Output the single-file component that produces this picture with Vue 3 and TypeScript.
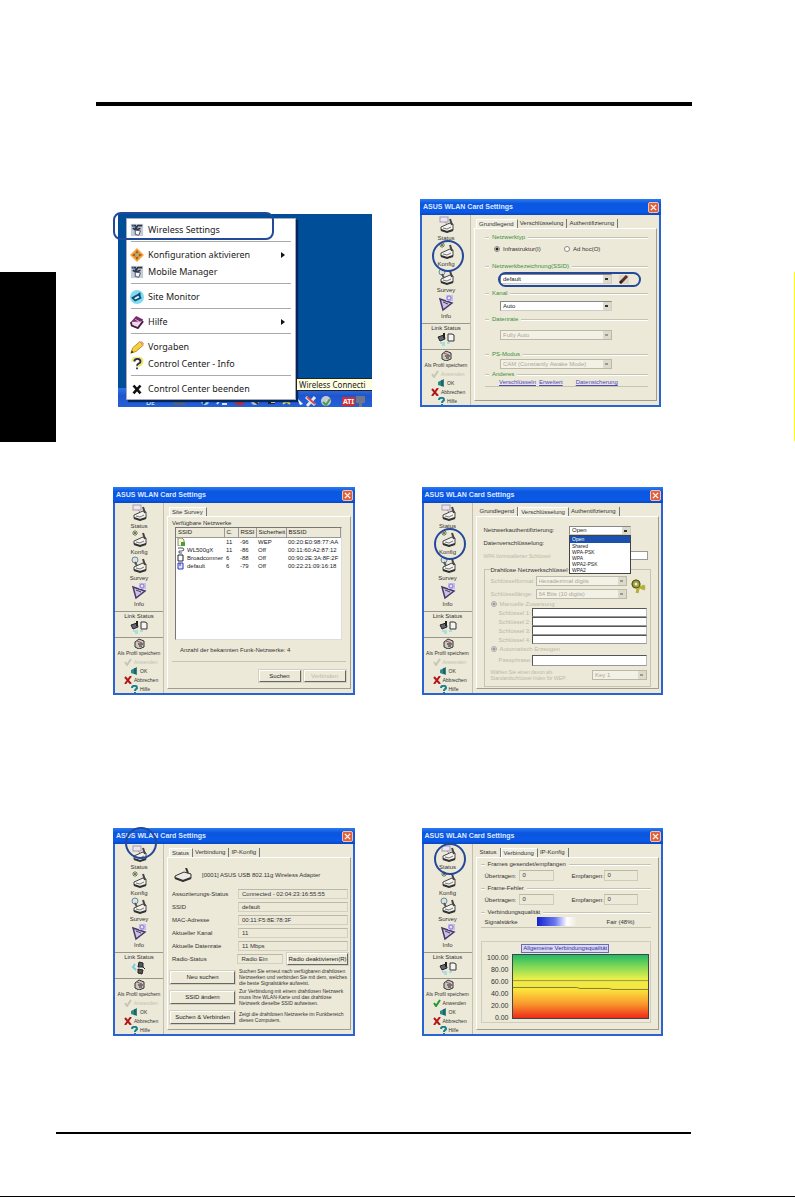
<script setup lang="ts">
type Kind = 'config' | 'survey' | 'crypt' | 'status' | 'link'

interface Dialog {
  kind: Kind
  tabs: string[]
  active: number
  ring: string
  canApply: boolean
}

const rows: Dialog[][] = [
  [{ kind: 'config', tabs: ['Grundlegend', 'Verschlüsselung', 'Authentifizierung'], active: 0, ring: 'ring-config', canApply: false }],
  [
    { kind: 'survey', tabs: ['Site Survey'], active: 0, ring: '', canApply: false },
    { kind: 'crypt', tabs: ['Grundlegend', 'Verschlüsselung', 'Authentifizierung'], active: 1, ring: 'ring-config', canApply: false },
  ],
  [
    { kind: 'status', tabs: ['Status', 'Verbindung', 'IP-Konfig'], active: 0, ring: 'ring-title', canApply: false },
    { kind: 'link', tabs: ['Status', 'Verbindung', 'IP-Konfig'], active: 1, ring: 'ring-status', canApply: true },
  ],
]

const menuGroups = [
  [{ icon: 'card', text: 'Wireless Settings', sub: false }],
  [
    { icon: 'config', text: 'Konfiguration aktivieren', sub: true },
    { icon: 'card', text: 'Mobile Manager', sub: false },
  ],
  [{ icon: 'monitor', text: 'Site Monitor', sub: false }],
  [{ icon: 'book', text: 'Hilfe', sub: true }],
  [
    { icon: 'pencil', text: 'Vorgaben', sub: false },
    { icon: 'info', text: 'Control Center - Info', sub: false },
  ],
  [{ icon: 'close', text: 'Control Center beenden', sub: false }],
]

const sideItems = ['Status', 'Konfig', 'Survey', 'Info']

const networks = [
  { icon: 'lock', ssid: '', ch: '11', rssi: '-96', sec: 'WEP', bssid: '00:20:E0:98:77:AA' },
  { icon: 'on', ssid: 'WL500gX', ch: '11', rssi: '-86', sec: 'Off', bssid: '00:11:60:A2:87:12' },
  { icon: 'page', ssid: 'Broadcomner', ch: '6', rssi: '-88', sec: 'Off', bssid: '00:90:2E:3A:8F:2F' },
  { icon: 'ap', ssid: 'default', ch: '6', rssi: '-79', sec: 'Off', bssid: '00:22:21:09:16:18' },
]

const authModes = ['Open', 'Shared', 'WPA-PSK', 'WPA', 'WPA2-PSK', 'WPA2']

const statusRows = [
  ['Assoziierungs-Status', 'Connected - 02:04:23:16:55:55'],
  ['SSID', 'default'],
  ['MAC-Adresse', '00:11:F5:8E:78:3F'],
  ['Aktueller Kanal', '11'],
  ['Aktuelle Datenrate', '11 Mbps'],
]

const actions = [
  { label: 'Neu suchen', text: 'Suchen Sie erneut nach verfügbaren drahtlosen Netzwerken und verbinden Sie mit dem, welches die beste Signalstärke aufweist.' },
  { label: 'SSID ändern', text: 'Zur Verbindung mit einem drahtlosen Netzwerk muss Ihre WLAN-Karte und das drahtlose Netzwerk dieselbe SSID aufweisen.' },
  { label: 'Suchen & Verbinden', text: 'Zeigt die drahtlosen Netzwerke im Funkbereich dieses Computers.' },
]

const frames = ['Frames gesendet/empfangen', 'Frame-Fehler']
const ticks = ['100.00', '80.00', '60.00', '40.00', '20.00', '0.00']
</script>

<template>
  <div class="page">
    <div class="thumb"></div>
    <main class="content">
      <hr class="rule-top" />
      <section v-for="(row, r) in rows" :key="r" class="row" :class="'row-' + r">
        <div v-if="r === 0" class="desktop">
          <div class="taskbar">
            <span class="lang">DE</span>
            <svg class="tray" viewBox="0 0 210 12">
              <rect x="12" y="2" width="12" height="8" fill="#50617e" />
              <circle cx="44" cy="6" r="4" fill="#9fd0ff" /><path d="M42 9l5-6" stroke="#235" stroke-width="2" />
              <path d="M56 9l5-7M61 9h5" stroke="#d6e7ff" stroke-width="2" />
              <rect x="74" y="3" width="9" height="7" fill="#b72a3b" /><rect x="77" y="2" width="5" height="4" fill="#333" />
              <circle cx="94" cy="6" r="4" fill="#b5bfd0" /><path d="M91 4l6 5" stroke="#333" stroke-width="2" />
              <path d="M107 3h7v6h-7z" fill="#222" /><path d="M110 5h4v3h-4z" fill="#ddd" />
              <path d="M121 3l8 6M122 9l6-5" stroke="#e8cb3b" stroke-width="2" />
              <path d="M136 3l3 7 3-1z" fill="#fff" />
              <path d="M145 2l9 8M154 2l-8 9" stroke="#e3e8ef" stroke-width="3" /><path d="M146 2l8 7" stroke="#d84848" stroke-width="2" />
              <circle cx="165" cy="6" r="5" fill="#c4ccd0" /><path d="M162 7l3 3 4-6" stroke="#4c9a50" stroke-width="2" fill="none" />
              <path d="M195 1h9v7h-3v4h-3v-4h-3z" fill="#6d7789" />
            </svg>
            <b class="ati">ATI</b>
          </div>
          <nav class="menu">
            <template v-for="(group, g) in menuGroups" :key="g">
              <hr v-if="g > 0" />
              <button v-for="item in group" :key="item.text" class="menu-item" type="button">
                <svg viewBox="0 0 16 16">
                  <g v-if="item.icon === 'card'">
                    <rect x="1" y="1" width="14" height="14" fill="#c3cdd8" />
                    <path d="M2 3h4l1 3 2-3h5M3 6l4 2 5-2" stroke="#334" stroke-width="2" fill="none" />
                    <path d="M6 8l6 1-2 5-4-1z" fill="#f6f8fa" stroke="#445" />
                    <path d="M3 3l3 2" stroke="#4e86c8" stroke-width="2" />
                  </g>
                  <g v-else-if="item.icon === 'config'">
                    <path d="M8 0l8 8-8 8-8-8z" fill="#f2a93f" /><path d="M8 2l2 4H6zM8 14l-2-4h4zM2 8l4-2v4zM14 8l-4 2V6z" fill="#b5541c" />
                    <circle cx="8" cy="8" r="2" fill="#8bb98a" />
                  </g>
                  <g v-else-if="item.icon === 'monitor'">
                    <circle cx="8" cy="8" r="8" fill="#7fdcf0" /><path d="M3 9l7-4 2 4-6 3z" fill="#d8f5fa" stroke="#134a78" stroke-width="2" /><path d="M11 3v4" stroke="#134a78" stroke-width="2" />
                  </g>
                  <g v-else-if="item.icon === 'book'">
                    <path d="M1 8l6-7 8 4-5 8z" fill="#7b2a6c" /><path d="M1 8l1 4 7 3 6-8" fill="#eadbe8" stroke="#4d164a" stroke-width="2" /><path d="M6 5l4 2-2 2" stroke="#e7b4dd" stroke-width="1" fill="none" />
                  </g>
                  <g v-else-if="item.icon === 'pencil'">
                    <path d="M1 15l2-6 8-7 4 4-8 7z" fill="#f5cf3d" stroke="#b98418" /><path d="M11 2l2-1 3 3-1 2z" fill="#e59a90" /><path d="M1 15l1-3 2 2z" fill="#222" />
                  </g>
                  <g v-else-if="item.icon === 'info'">
                    <path d="M4 5c0-5 9-5 9 0 0 3-4 3-4 6" stroke="#f0e95c" stroke-width="5" fill="none" />
                    <path d="M5 5c0-4 7-4 7 0 0 3-4 2-4 5M8 12v2" stroke="#22246e" stroke-width="2" fill="none" />
                  </g>
                  <path v-else d="M4 4l8 9M12 4l-8 9" stroke="#111" stroke-width="3" />
                </svg>
                <span>{{ item.text }}</span>
                <i v-if="item.sub" class="sub"></i>
              </button>
            </template>
          </nav>
          <div class="tooltip">Wireless Connecti</div>
          <div class="menu-ring"></div>
        </div>

        <article v-for="d in row" :key="d.kind" class="dialog">
          <header class="titlebar">
            <span>ASUS WLAN Card Settings</span>
            <button type="button" class="x" aria-label="Schließen"><svg viewBox="0 0 8 8"><path d="M1 1l6 6M7 1l-6 6" stroke="#fff" stroke-width="1.5" /></svg></button>
          </header>
          <div class="body">
            <aside class="side">
              <button v-for="(s, i) in sideItems" :key="s" type="button" class="side-item">
                <svg viewBox="0 0 18 18">
                  <g v-if="i < 3">
                    <path d="M4 11l9-4 3 1v6l-6 2-6-2z" fill="#f4f3ee" stroke="#444" stroke-width="1" />
                    <path d="M4 14l6 2 6-2" stroke="#333" stroke-width="2" fill="none" />
                    <path d="M13 3l2 6" stroke="#444" stroke-width="2" />
                    <path d="M6 12l4 1 4-2" stroke="#777" fill="none" />
                    <g v-if="i === 0"><rect x="3" y="1" width="8" height="5" fill="#ece6f2" stroke="#a39bb0" /><path d="M8 6l3 3" stroke="#b78aa0" /></g>
                    <path v-else-if="i === 1" d="M5 0v6M2 3h6M3 1l4 4M7 1l-4 4" stroke="#6d7c58" />
                    <g v-else><circle cx="5" cy="4" r="3" fill="#d9e3e5" stroke="#6d8793" /><path d="M5 6l2 4" stroke="#555" stroke-width="2" /></g>
                  </g>
                  <g v-else>
                    <path d="M3 5l12 4-9 7z" fill="#cbc2e2" stroke="#49376e" stroke-width="1.5" />
                    <path d="M6 8l5 2" stroke="#444" /><rect x="9" y="1" width="7" height="6" fill="#c5bdf0" /><circle cx="12" cy="4" r="2" fill="#e6e2ff" stroke="#8878d0" />
                  </g>
                </svg>
                <span>{{ s }}</span>
              </button>
              <div class="side-link">
                <span>Link Status</span>
                <svg v-if="d.kind !== 'status'" viewBox="0 0 18 14">
                  <path d="M1 5l6-2 1 4-5 2z" fill="#667" stroke="#222" /><path d="M7 1v5" stroke="#222" stroke-width="2" />
                  <path d="M11 2h4l2 1v6h-6z" fill="#f4f4f4" stroke="#333" />
                  <path d="M3 11h5M5 13h3M10 11h3" stroke="#65d5dc" stroke-width="1" />
                </svg>
                <svg v-else viewBox="0 0 18 14">
                  <path d="M9 1l4 1v4H8z" fill="#556" stroke="#222" /><path d="M8 8l5 1-1 4-4-1z" fill="#555" stroke="#222" />
                  <path d="M5 3l-2 3 3 3" stroke="#6fd0dc" stroke-width="2" fill="none" /><path d="M13 6l2 2" stroke="#222" />
                </svg>
              </div>
              <div class="side-actions">
                <button type="button" class="save">
                  <svg viewBox="0 0 12 11"><path d="M2 4l4-3 5 2v6l-5 2-4-2z" fill="#c9c7c2" stroke="#333" /><path d="M5 6h5M6 8h3" stroke="#222" stroke-width="1" /><path d="M4 3l5 2" stroke="#b34a4a" /></svg>
                  <span>Als Profil speichern</span>
                </button>
                <button type="button" class="act" :class="{ off: !d.canApply }" :disabled="!d.canApply">
                  <svg viewBox="0 0 8 8"><path d="M1 4l2 3 4-6" :stroke="d.canApply ? '#1e9a2c' : '#c9c6b8'" stroke-width="2" fill="none" /></svg>Anwenden
                </button>
                <button type="button" class="act mid">
                  <svg viewBox="0 0 8 8"><path d="M1 3l6-3v8l-6-2z" fill="#2b8a86" /><path d="M5 1v6" stroke="#173f4a" /></svg>OK
                </button>
                <button type="button" class="act">
                  <svg viewBox="0 0 8 8"><path d="M1 1l6 7M7 0l-6 8" stroke="#b3161a" stroke-width="2" /></svg>Abbrechen
                </button>
                <button type="button" class="act mid">
                  <svg viewBox="0 0 8 8"><path d="M2 3c0-3 5-3 5 0 0 1-2 1-2 3M5 7v1" stroke="#16808e" stroke-width="2" fill="none" /></svg>Hilfe
                </button>
              </div>
            </aside>

            <div class="main">
              <div class="tabs" role="tablist">
                <button v-for="(t, i) in d.tabs" :key="t" type="button" role="tab" :class="{ on: i === d.active }" :aria-selected="i === d.active">{{ t }}</button>
              </div>

              <form v-if="d.kind === 'config'" class="panel config" @submit.prevent>
                <div class="group g-type">
                  <h4>Netzwerktyp</h4>
                  <div class="radios">
                    <label><input type="radio" name="nettype" checked />Infrastruktur(I)</label>
                    <label><input type="radio" name="nettype" />Ad hoc(O)</label>
                  </div>
                </div>
                <div class="group g-ssid">
                  <h4>Netzwerkbezeichnung(SSID)</h4>
                  <div class="field">
                    <select aria-label="SSID"><option>default</option></select>
                    <button type="button" class="pen" aria-label="Bearbeiten"><svg viewBox="0 0 10 9"><rect width="10" height="9" fill="#e0d6c8" /><path d="M1 8l7-7" stroke="#5b2d22" stroke-width="3" /><path d="M1 8l2-2" stroke="#222" stroke-width="2" /></svg></button>
                  </div>
                </div>
                <div class="group g-chan">
                  <h4>Kanal</h4>
                  <div class="field"><select aria-label="Kanal"><option>Auto</option></select></div>
                </div>
                <div class="group g-rate">
                  <h4>Datenrate</h4>
                  <div class="field"><select aria-label="Datenrate" disabled><option>Fully Auto</option></select></div>
                </div>
                <div class="group g-ps">
                  <h4>PS-Modus</h4>
                  <div class="field"><select aria-label="PS-Modus" disabled><option>CAM (Constantly Awake Mode)</option></select></div>
                </div>
                <div class="group g-other">
                  <h4>Anderes</h4>
                  <div class="links"><a href="#">Verschlüsseln</a><a href="#">Erweitert</a><a href="#" class="far">Datensicherung</a></div>
                </div>
                <div class="ssid-ring"></div>
              </form>

              <div v-else-if="d.kind === 'survey'" class="panel survey">
                <div class="box">
                  <h4>Verfügbare Netzwerke</h4>
                  <div class="list">
                    <table>
                      <thead><tr><th class="c1">SSID</th><th class="c2">C.</th><th class="c3">RSSI</th><th class="c4">Sicherheit</th><th>BSSID</th></tr></thead>
                      <tbody>
                        <tr v-for="n in networks" :key="n.bssid">
                          <td>
                            <svg viewBox="0 0 8 8">
                              <g v-if="n.icon === 'lock'"><path d="M1 0h4l2 2v6H1z" fill="#f8f6cf" stroke="#887" /><rect x="4" y="4" width="4" height="4" fill="#4f9a3a" /></g>
                              <path v-else-if="n.icon === 'on'" d="M1 2h5l1 2-2 1H2v2h3" stroke="#556" fill="none" stroke-width="1" />
                              <path v-else-if="n.icon === 'page'" d="M1 1h5v6H1z" fill="#fff" stroke="#223" />
                              <g v-else><path d="M1 1h5v6H1z" fill="#dfe4ff" stroke="#2a36b8" /><path d="M3 1v3" stroke="#2a36b8" /></g>
                            </svg>{{ n.ssid }}
                          </td>
                          <td>{{ n.ch }}</td><td>{{ n.rssi }}</td><td>{{ n.sec }}</td><td>{{ n.bssid }}</td>
                        </tr>
                      </tbody>
                    </table>
                  </div>
                  <p>Anzahl der bekannten Funk-Netzwerke: 4</p>
                </div>
                <div class="buttons">
                  <button type="button" class="btn">Suchen</button>
                  <button type="button" class="btn" disabled>Verbinden</button>
                </div>
              </div>

              <form v-else-if="d.kind === 'crypt'" class="panel crypt" @submit.prevent>
                <div class="auth">
                  <label for="auth">Netzwerkauthentifizierung:</label>
                  <div class="combo">
                    <select id="auth"><option>Open</option></select>
                    <ul><li v-for="(m, i) in authModes" :key="m" :class="{ sel: i === 0 }">{{ m }}</li></ul>
                  </div>
                </div>
                <div class="auth">Datenverschlüsselung:</div>
                <div class="auth dim"><label for="psk">WPA Vorinstallierter Schlüssel:</label><input id="psk" type="text" disabled /></div>
                <div class="keys">
                  <h4>Drahtlose Netzwerkschlüssel</h4>
                  <div class="kgrid">
                    <div class="kcols">
                      <label class="krow">Schlüsselformat:<select disabled><option>Hexadezimal digits</option></select></label>
                      <label class="krow">Schlüssellänge:<select disabled><option>64 Bits (10 digits)</option></select></label>
                    </div>
                    <svg class="key" viewBox="0 0 16 16"><circle cx="5" cy="5" r="3" fill="none" stroke="#9a9a38" stroke-width="3" /><path d="M7 7l7 3M8 6l-2 8M12 9l1-3" stroke="#b5b03a" stroke-width="3" /><circle cx="5" cy="5" r="4" fill="none" stroke="#555522" stroke-width="1" /></svg>
                  </div>
                  <label class="pick"><input type="radio" name="mode" checked disabled />Manuelle Zuweisung</label>
                  <label v-for="k in 4" :key="k" class="kin">Schlüssel {{ k }}:<input type="text" /></label>
                  <label class="pick auto"><input type="radio" name="mode" disabled />Automatisch Erzeugen</label>
                  <label class="kin pass">Passphrase:<input type="text" /></label>
                  <div class="def">
                    <label for="defkey">Wählen Sie einen davon als<br />Standardschlüssel-Index für WEP:</label>
                    <select id="defkey" disabled><option>Key 1</option></select>
                  </div>
                </div>
              </form>

              <div v-else-if="d.kind === 'status'" class="panel status">
                <div class="adapter">
                  <svg viewBox="0 0 18 14"><path d="M1 8l9-4 7 2v4l-8 3-8-3z" fill="#eceae4" stroke="#333" /><path d="M1 10l8 3 8-3" stroke="#333" stroke-width="2" fill="none" /><path d="M12 0l2 5" stroke="#333" stroke-width="2" /></svg>
                  <span>[0001] ASUS USB 802.11g Wireless Adapter</span>
                </div>
                <dl>
                  <div v-for="s in statusRows" :key="s[0]"><dt>{{ s[0] }}</dt><dd>{{ s[1] }}</dd></div>
                  <div><dt>Radio-Status</dt><dd class="short">Radio Ein</dd><button type="button" class="btn radio-btn">Radio deaktivieren(R)</button></div>
                </dl>
                <div class="acts">
                  <div v-for="a in actions" :key="a.label"><button type="button" class="btn">{{ a.label }}</button><p>{{ a.text }}</p></div>
                </div>
              </div>

              <div v-else class="panel link">
                <div v-for="f in frames" :key="f" class="group g-frames">
                  <h4>{{ f }}</h4>
                  <div class="counts"><span>Übertragen:</span><output>0</output><span class="rx">Empfangen:</span><output>0</output></div>
                </div>
                <div class="group g-quality">
                  <h4>Verbindungsqualität</h4>
                  <div class="counts"><span>Signalstärke</span><i class="meter"></i><span class="fair">Fair (48%)</span></div>
                </div>
                <div class="chart">
                  <h5>Allgemeine Verbindungsqualität</h5>
                  <div class="plot">
                    <ol><li v-for="t in ticks" :key="t">{{ t }}</li></ol>
                    <svg viewBox="0 0 138 64" preserveAspectRatio="none">
                      <path d="M0 26h138" stroke="#a8923c" stroke-width="1" />
                      <path d="M0 33h65l3 1h30l3 1h37" stroke="#7d8038" stroke-width="1" fill="none" />
                    </svg>
                  </div>
                </div>
              </div>
            </div>
          </div>
          <div v-if="d.ring" class="ring" :class="d.ring"></div>
        </article>
      </section>
      <hr class="rule-bottom" />
    </main>
    <div class="edge"></div>
  </div>
</template>

<style>
body { margin: 0; background: #fff; }
</style>

<style scoped>
* { box-sizing: border-box; }
.page {
  display: grid;
  grid-template-columns: 56px minmax(0, 1fr) 1px;
  min-height: 100vh;
  border-bottom: 1px solid #000;
  font-family: "Liberation Sans", Arial, sans-serif;
  font-size: 6px;
  line-height: 8px;
  color: #333;
}
button, input, select { font: inherit; color: inherit; margin: 0; padding: 0; border-radius: 0; }
button { background: none; border: 0; white-space: nowrap; }
h4, h5, p, dl, dd, ol, ul { margin: 0; padding: 0; font-size: inherit; font-weight: normal; list-style: none; }
svg { display: block; flex: none; }
.thumb { margin-top: 272px; height: 170px; background: #000; }
.edge { margin-top: 272px; height: 169px; background: #ff0; }
.content { display: flex; flex-direction: column; }
hr { margin: 0; border: 0; background: #000; }
.rule-top { height: 4px; margin: 102px 102px 0 40px; }
.rule-bottom { height: 2px; margin: 96px 103px 0 0; }

.row { display: grid; grid-template-columns: minmax(0, 1fr) minmax(0, 1fr); column-gap: 67px; margin: 133px 131px 0 57px; align-items: start; }
.row-0 { grid-template-columns: minmax(0, 254fr) minmax(0, 241fr); column-gap: 48px; margin: 93px 133px 0 62px; }
.row-1 { margin-top: 80px; }

/* desktop with tray menu */
.desktop { position: relative; display: grid; margin-top: 15px; background: #004e98; min-height: 193px; font-family: "Noto Sans", sans-serif; font-size: 9px; line-height: 12px; }
.desktop > .taskbar, .desktop > .menu, .desktop > .tooltip { grid-area: 1 / 1; }
.taskbar { position: relative; align-self: end; height: 19px; background: linear-gradient(#2f74e8, #1f55cc 40%, #2460d8); display: flex; align-items: flex-end; padding-left: 28px; color: #fff; font-size: 7px; line-height: 9px; overflow: hidden; }
.tray { width: 210px; height: 12px; margin-left: 6px; }
.ati { position: absolute; right: 17px; bottom: 1px; padding: 0 1px; background: #d12e35; font-size: 7px; }
.menu { position: relative; align-self: start; margin: 4px 0 0 8px; width: 170px; padding: 2px; background: #fff; border: 1px solid #aab; box-shadow: 2px 2px 1px #00285c; display: flex; flex-direction: column; }
.menu hr { height: 1px; margin: 3px 2px 4px; background: #aaa; }
.menu-item { display: flex; align-items: center; gap: 4px; height: 17px; padding: 0 8px 0 1px; color: #222; }
.menu-item svg { width: 14px; height: 14px; }
.sub { margin-left: auto; border: 3px solid transparent; border-left: 4px solid #111; border-right: 0; }
.tooltip { position: relative; align-self: end; justify-self: end; margin-bottom: 16px; width: 76px; height: 13px; background: #ffffe1; border: 1px solid #222; border-right: 0; padding-left: 2px; font-size: 8px; line-height: 11px; color: #222; white-space: nowrap; }
.menu-ring { position: absolute; left: -5px; top: -2px; width: 161px; height: 28px; border: 2px solid #24489a; border-radius: 8px; }

/* dialog frame */
.dialog { position: relative; border: 2px solid #2a63d4; border-top: 0; background: #ece9d8; }
.titlebar { display: flex; align-items: center; justify-content: space-between; height: 16px; margin: 0 -2px; padding: 0 2px 0 3px; background: linear-gradient(#2a7cf0, #0b56e0 30%, #0a5ae8 80%, #0846c0); color: #dfe9ff; font-size: 7px; font-weight: bold; }
.x { width: 11px; height: 11px; border: 1px solid #f4c0b0; border-radius: 2px; background: #e0603a; padding: 1px; }
.x svg { width: 7px; height: 7px; }
.body { display: flex; min-height: 190px; }
.side { width: 49px; flex: none; display: flex; flex-direction: column; border-right: 1px solid #c2bfae; padding-top: 1px; }
.side button { display: flex; align-items: center; }
.side-item { flex-direction: column; height: 26px; }
.side-item svg { width: 18px; height: 18px; }
.side-link { display: flex; flex-direction: column; align-items: center; height: 26px; margin-top: 3px; border-top: 1px solid #99968a; }
.side-link svg { width: 18px; height: 14px; }
.side-actions { border-top: 1px solid #99968a; font-size: 5px; }
.side-actions .save { flex-direction: column; height: 19px; width: 100%; }
.save svg { width: 12px; height: 11px; }
.side-actions .act { width: 100%; height: 9px; gap: 2px; padding-left: 9px; }
.side-actions .mid { padding-left: 15px; }
.act svg { width: 8px; height: 8px; }
.side-actions .off { color: #c4c0b0; }
.main { flex: 1; min-width: 0; display: flex; flex-direction: column; padding: 4px 2px 4px 3px; }
.tabs { display: flex; height: 9px; padding-left: 2px; }
.tabs button { padding: 0 3px 0 2px; border-right: 1px solid #777; line-height: 9px; }
.tabs .on { border-top: 1px solid #fff; border-left: 1px solid #fff; background: #f0eee0; line-height: 8px; }
.panel { position: relative; flex: 1; border: 1px solid #fff; border-right-color: #a19e90; border-bottom-color: #a19e90; }

.ring { position: absolute; width: 32px; height: 32px; border: 2px solid #24489a; border-radius: 50%; left: 10px; }
.ring-config { top: 41px; }
.ring-title { top: -1px; }
.ring-status { top: 15px; }

.group { display: flex; flex-direction: column; }
.group h4 { display: flex; align-items: center; gap: 3px; height: 8px; }
.group h4::before, .group h4::after { content: ""; height: 1px; background: #c6c3b2; box-shadow: 0 1px #fff; }
.group h4::before { width: 4px; }
.group h4::after { flex: 1; }

select { appearance: none; height: 10px; border: 1px solid #888; border-right-color: #ccc; border-bottom-color: #ccc; padding: 0 10px 0 2px; line-height: 8px; color: #222; opacity: 1;
  background: linear-gradient(#333, #333) right 3px top 3px / 3px 2px no-repeat, linear-gradient(#dedac9, #dedac9) right / 8px 100% no-repeat, #fff; }
select:disabled { color: #aaa795; background: linear-gradient(#999, #999) right 3px top 3px / 3px 2px no-repeat, linear-gradient(#dedac9, #dedac9) right / 8px 100% no-repeat, #f3f1e6; border-color: #bbb8a8; }
input[type="text"] { height: 9px; min-width: 0; border: 1px solid #555; border-right-color: #bbb; border-bottom-color: #999; background: #fff; }
input[type="radio"] { appearance: none; width: 6px; height: 6px; border: 1px solid #888; border-radius: 50%; background: #fff; }
input[type="radio"]:checked { background: radial-gradient(#222 1px, #fff 2px); }
input[type="radio"]:disabled { border-color: #aaa; background: radial-gradient(#999 1px, #f3f1e6 2px); }
.btn { border: 1px solid #fff; border-right-color: #666; border-bottom-color: #666; background: #ece9d8; box-shadow: 0 0 0 1px #d4d0c0; color: #222; text-align: center; }
.btn:disabled { color: #bbb8a8; }

/* basic configuration */
.config { padding: 4px 8px 0 10px; }
.config h4 { color: #38903c; }
.g-type { height: 29px; }
.g-ssid { height: 27px; }
.g-chan { height: 26px; }
.g-rate { height: 35px; }
.g-ps { height: 20px; }
.g-other { height: 17px; border-bottom: 1px solid #c6c3b2; }
.radios { display: grid; grid-template-columns: 70px 1fr; padding: 4px 0 0 9px; }
.radios label { display: flex; align-items: center; gap: 3px; }
.field { display: flex; gap: 7px; padding: 4px 0 0 15px; }
.g-rate .field { padding-top: 7px; }
.g-ps .field { padding-top: 1px; }
.field select { width: 112px; height: 10px; }
.pen { width: 10px; height: 10px; }
.pen svg { width: 10px; height: 9px; }
.ssid-ring { position: absolute; left: 23px; top: 43px; width: 143px; height: 15px; border: 2px solid #24489a; border-radius: 8px; }
.links { display: flex; gap: 3px; padding-left: 14px; }
.links a { color: #4a48c0; }
.far { margin-left: 10px; }

/* site survey */
.survey { padding: 2px 4px 0 4px; }
.box { height: 143px; border-bottom: 1px solid #c6c3b2; }
.list { height: 113px; margin: 0 4px 0 3px; background: #fff; border: 1px solid #777; border-right-color: #ddd; border-bottom-color: #ddd; }
.list table { width: 100%; border-collapse: collapse; table-layout: fixed; color: #222; }
.list th { height: 9px; padding: 0 0 0 2px; text-align: left; font-weight: normal; background: #ece9d8; border-right: 1px solid #999; border-bottom: 1px solid #999; line-height: 7px; }
.list td { height: 8px; padding: 0 0 0 2px; line-height: 8px; white-space: nowrap; }
.list td:first-child { display: flex; gap: 2px; padding-left: 1px; }
.list td svg { width: 8px; height: 8px; }
.c1 { width: 48px; } .c2 { width: 14px; } .c3 { width: 18px; } .c4 { width: 30px; }
.box p { padding: 6px 0 0 8px; }
.buttons { display: flex; justify-content: flex-end; gap: 3px; padding-top: 8px; }
.buttons .btn { width: 42px; height: 12px; }

/* encryption */
.crypt { padding: 7px 10px 0 7px; }
.auth { display: flex; align-items: center; justify-content: space-between; height: 13px; }
.crypt > .auth:first-child { height: 12px; }
.auth input { width: 79px; }
.auth input:disabled { border-color: #999; }
.dim label { font-size: 5px; }
.dim, .keys { color: #bbb8a8; }
.combo { position: relative; width: 62px; margin-right: 17px; color: #222; }
.combo select { display: block; width: 100%; height: 9px; line-height: 7px; }
.combo ul { position: absolute; z-index: 2; top: 9px; left: 0; right: 0; height: 39px; background: #fff; border: 1px solid #444; overflow: hidden; }
.combo li { height: 6px; font-size: 5px; line-height: 6px; padding-left: 2px; }
.combo .sel { height: 7px; background: #1c50ae; color: #fff; }
.keys { border: 1px solid #c6c3b2; margin: 7px -3px 0 0; height: 118px; padding: 0 3px 0 6px; }
.keys h4 { width: max-content; margin-top: -4px; background: #ece9d8; color: #333; }
.kgrid { display: flex; align-items: center; gap: 4px; }
.kcols { flex: 1; }
.krow { display: grid; grid-template-columns: 45px 1fr; align-items: center; height: 13px; }
.krow select { width: 100%; min-width: 0; }
.key { width: 16px; height: 16px; }
.pick { display: flex; align-items: center; gap: 3px; height: 8px; }
.auto { height: 10px; }
.kin { display: grid; grid-template-columns: 33px 1fr; align-items: center; height: 9px; padding-left: 8px; }
.pass { height: 12px; }
.pass input { height: 11px; }
.def { display: flex; align-items: center; justify-content: space-between; font-size: 5px; line-height: 6px; height: 17px; }
.def select { width: 55px; font-size: 6px; }

/* status */
.status { padding: 4px 2px 0 2px; }
.adapter { display: flex; align-items: center; gap: 10px; height: 26px; padding-left: 4px; }
.adapter svg { width: 18px; height: 14px; }
.status dl div { display: flex; align-items: center; height: 13px; }
.status dl div:first-child { height: 12px; }
.status dt { width: 68px; padding-left: 2px; }
.status dd { flex: 1; height: 10px; border: 1px solid #d4d0c0; border-top-color: #bbb8a8; padding-left: 3px; }
.status dd.short { flex: none; width: 46px; }
.radio-btn { flex: 1; height: 12px; margin-left: 4px; }
.acts { padding-top: 2px; }
.acts div { display: grid; grid-template-columns: 65px minmax(0, 1fr); gap: 4px; align-items: center; height: 20px; }
.acts p { font-size: 5px; line-height: 6px; }
.acts .btn { height: 13px; }

/* link quality */
.link { padding: 2px 7px 0 4px; }
.g-frames { height: 24px; }
.g-quality { height: 20px; border-bottom: 1px solid #c6c3b2; }
.counts { display: grid; align-items: center; padding: 2px 0 0 4px; }
.g-frames .counts { grid-template-columns: 34px 35px 18px 32px 34px; }
.g-frames .rx { grid-column: 4; }
output { height: 11px; border: 1px solid #d0ccbb; border-top-color: #bbb8a8; padding-left: 3px; line-height: 9px; }
.g-quality .counts { grid-template-columns: 52px 40px 30px 1fr; padding-top: 1px; }
.meter { height: 9px; background: linear-gradient(90deg, #1420d0, #6a78ee 45%, #fff 75%, #ece9d8); }
.fair { grid-column: 4; }
.chart { margin-top: 13px; height: 82px; border: 1px solid #d0ccbb; padding: 2px 1px 0 0; }
.chart h5 { width: max-content; margin: 0 auto 1px; padding: 0 1px; border: 1px solid #6a68b8; line-height: 7px; color: #3432a0; background: #dcdaf0; }
.plot { display: grid; grid-template-columns: 30px minmax(0, 1fr); }
.plot ol { display: flex; flex-direction: column; justify-content: space-between; height: 68px; text-align: right; padding-right: 3px; font-size: 7px; }
.plot svg { width: 100%; height: 65px; border: 1px solid #444; background: linear-gradient(#24b865, #7fd858 18%, #e8f04a 38%, #fbe33c 55%, #f9972c 78%, #ee2a18); }
</style>
